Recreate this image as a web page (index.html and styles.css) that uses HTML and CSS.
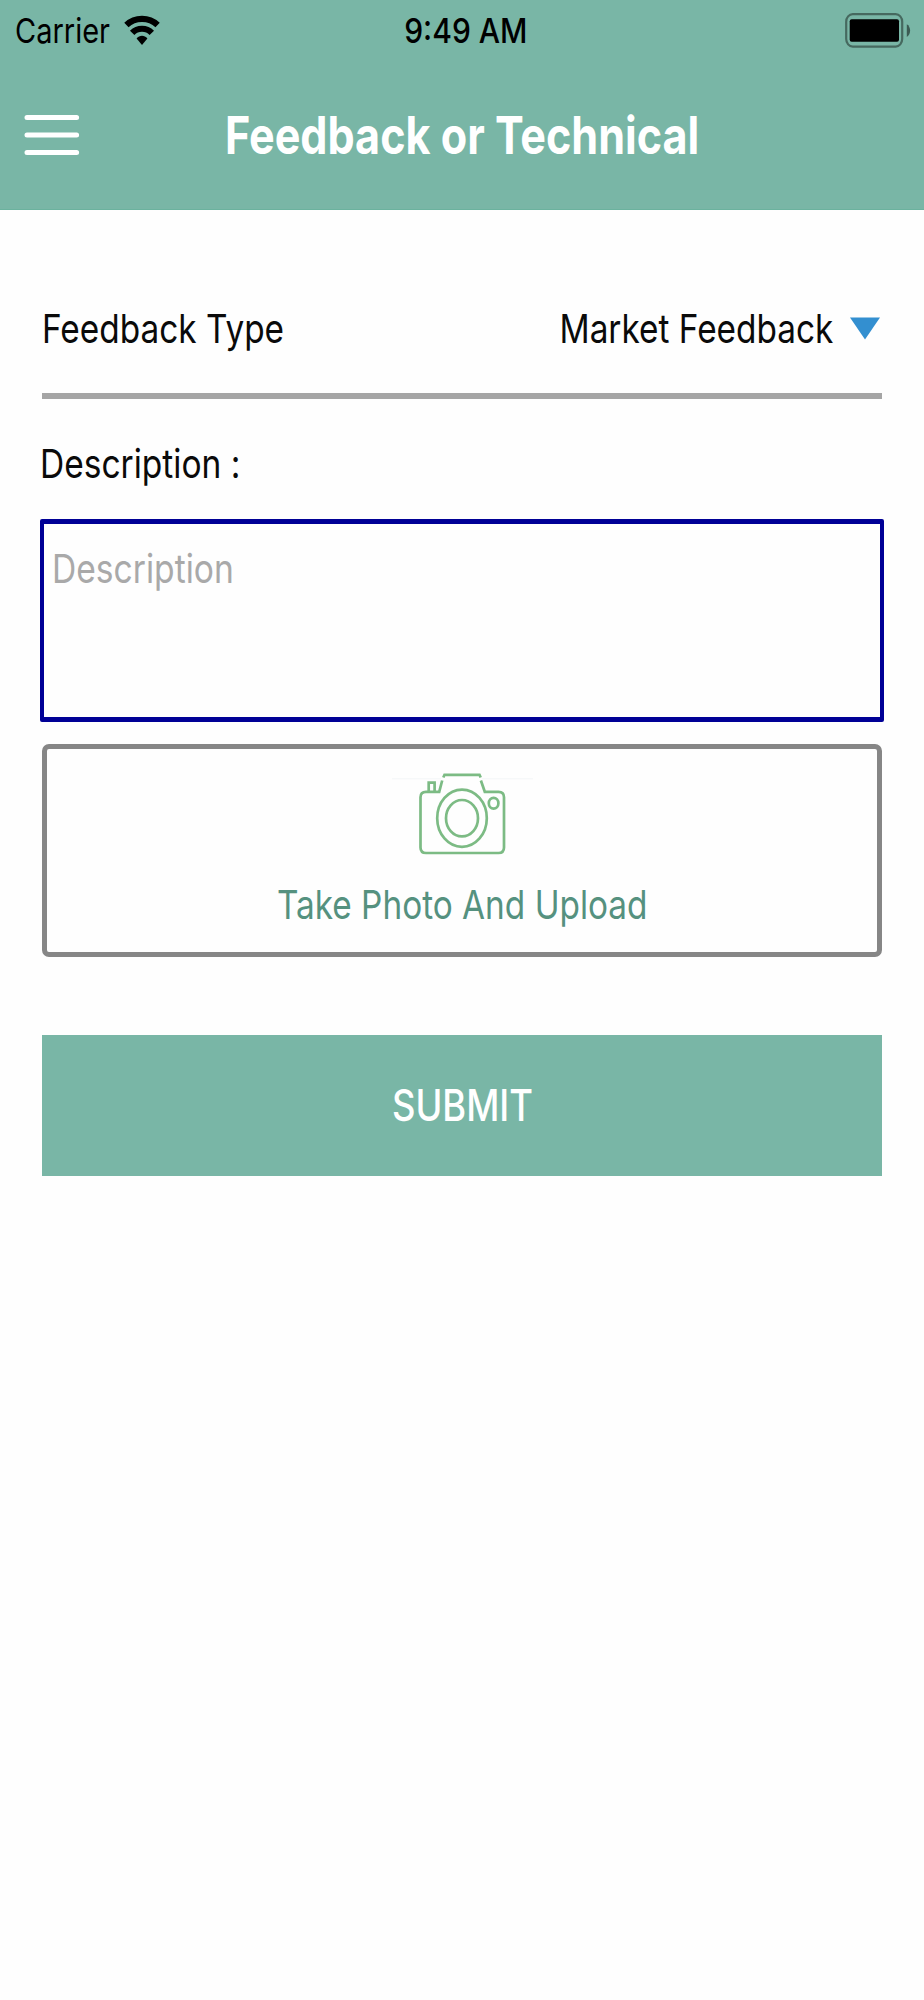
FILE: index.html
```html
<!DOCTYPE html>
<html lang="en">
<head>
<meta charset="utf-8">
<title>Feedback or Technical</title>
<link rel="stylesheet" href="styles.css">
</head>
<body>
<header class="header">
  <div class="status">
    <div class="status-left">
      <span class="carrier">Carrier</span>
      <svg class="wifi" width="36" height="32" viewBox="0 0 36 32">
        <g fill="none" stroke="#000" stroke-width="6.2">
          <path d="M2.4 11C11 2.8 25 2.8 33.6 11"/>
          <path d="M8.2 18.8C13.5 13.4 22.5 13.4 27.8 18.8"/>
        </g>
        <path d="M12.6 24.4C15.5 20.8 20.5 20.8 23.4 24.4L18 31Z"/>
      </svg>
    </div>
    <span class="time">9:49 AM</span>
    <svg class="battery" width="66" height="36" viewBox="0 0 66 36">
      <rect x="1.2" y="1.2" width="56" height="32.4" rx="6.5" ry="7.5" fill="none" stroke="#46695f" stroke-width="2.2"/>
      <rect x="4.7" y="6.2" width="49.3" height="22.6" rx="2"/>
      <path d="M61.8 11.2C66.2 13.5 66.2 21.7 61.8 24Z" fill="#3c5b53"/>
    </svg>
  </div>
  <nav class="nav">
    <svg class="menu" width="56" height="42" viewBox="0 0 56 42">
      <g stroke="#fff" stroke-width="5" stroke-linecap="round">
        <path d="M3 3.5H52.6M3 21H52.6M3 38.5H52.6"/>
      </g>
    </svg>
    <h1 class="title">Feedback or Technical</h1>
  </nav>
</header>
<main class="form">
  <div class="type-row">
    <span class="type-label">Feedback Type</span>
    <div class="select">
      <span class="type-value">Market Feedback</span>
      <svg class="arrow" width="30" height="23" viewBox="0 0 30 23"><path d="M0 .6H30L15 22.5Z" fill="#338fd0"/></svg>
    </div>
  </div>
  <div class="desc-row"><span class="desc-label">Description :</span></div>
  <div class="textarea"><span class="placeholder">Description</span></div>
  <div class="photo">
    <svg class="camera" width="146" height="84" viewBox="389 772 146 84">
      <path d="M392 778.8H441M482 778.8H533" stroke="#f3f5f7" stroke-width="1"/>
      <g fill="none" stroke="#7cbb84" stroke-width="2.7">
        <path d="M443.3 777.5L444.5 774.8H479.5L480.7 777.5"/>
        <path d="M442.2 780.5L439.2 791.8H426Q420.5 791.8 420.5 797.3V847.5Q420.5 853 426 853H498.5Q504 853 504 847.5V797.3Q504 791.8 498.5 791.8H484.8L480.9 780.5"/>
        <path d="M428.7 791V782.7H434.6V791"/>
        <ellipse cx="462" cy="818.2" rx="24.8" ry="28.6"/>
        <ellipse cx="462" cy="818.2" rx="16" ry="18.2"/>
        <ellipse cx="493.6" cy="803.2" rx="4.8" ry="5.4"/>
      </g>
    </svg>
    <span class="photo-text">Take Photo And Upload</span>
  </div>
  <div class="submit"><span class="submit-text">SUBMIT</span></div>
</main>
</body>
</html>
```
FILE: styles.css
```css
* { box-sizing: border-box; }
body {
  margin: 0;
  min-height: 2000px;
  background: #fefefe;
  font-family: Inter, "Liberation Sans", sans-serif;
  font-size: 40px;
  line-height: 48px;
  color: #0a0a0a;
  white-space: nowrap;
}
svg { display: block; flex: none; }
span { display: block; }
.header {
  height: 210px;
  background: #79b6a6;
  border-bottom: 1px solid #6bb29e;
}
.status {
  display: grid;
  grid-template-columns: 1fr auto 1fr;
  align-items: center;
  height: 62px;
  padding: 0 0 0 15px;
  color: #000;
  font-size: 34.5px;
}
.status-left { display: flex; align-items: center; }
.carrier { width: 109px; transform: scaleX(.84); transform-origin: left; }
.wifi { margin-top: -2px; }
.time { font-weight: 500; transform: scaleX(.87); margin-right: 8px; }
.battery { justify-self: end; margin-right: 13px; }
.nav {
  display: grid;
  grid-template-columns: 80px 1fr 80px;
  align-items: center;
  height: 147px;
}
.menu { margin: 0 0 1px 24px; }
.title {
  margin: 0;
  justify-self: center;
  font-size: 52px;
  line-height: 64px;
  font-weight: 700;
  color: #fff;
  transform: scaleX(.829);
}
.form { padding: 54px 42px 0; }
.type-row {
  display: flex;
  justify-content: space-between;
  align-items: center;
  height: 135px;
  border-bottom: 6px solid #a5a5a5;
}
.type-label { transform: scaleX(.834); transform-origin: left; }
.select { display: flex; align-items: center; gap: 17px; margin-right: 2px; }
.type-value { transform: scaleX(.834); transform-origin: right; }
.desc-row { display: flex; align-items: center; height: 120px; padding-top: 9px; }
.desc-label { margin-left: -2px; transform: scaleX(.838); transform-origin: left; }
.textarea {
  height: 203px;
  margin: 0 -2px;
  padding: 21px 8px;
  border: solid #000096;
  border-width: 5px 4px;
  border-radius: 2px;
}
.placeholder { color: #a9a9a9; transform: scaleX(.84); transform-origin: left; }
.photo {
  display: flex;
  flex-direction: column;
  align-items: center;
  height: 213px;
  margin-top: 21.5px;
  padding-top: 23.5px;
  border: 5px solid #868686;
  border-radius: 7px;
}
.photo-text { margin-top: 25px; color: #55917f; transform: scaleX(.834); }
.submit {
  display: grid;
  place-items: center;
  height: 141px;
  margin-top: 78px;
  background: #79b6a6;
}
.submit-text { font-size: 43.5px; font-weight: 500; color: #fff; transform: scaleX(.835); }
```
